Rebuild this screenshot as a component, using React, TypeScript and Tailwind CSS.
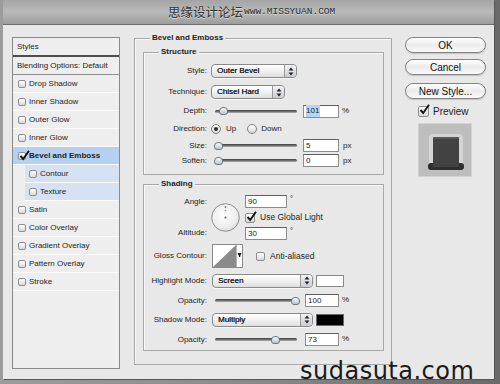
import React from "react";
import clsx from "clsx";

const listItems = [
  { name: "Drop Shadow" },
  { name: "Inner Shadow" },
  { name: "Outer Glow" },
  { name: "Inner Glow" },
  { name: "Bevel and Emboss", checked: true, selected: true },
  { name: "Contour", sub: true },
  { name: "Texture", sub: true },
  { name: "Satin" },
  { name: "Color Overlay" },
  { name: "Gradient Overlay" },
  { name: "Pattern Overlay" },
  { name: "Stroke" },
];

function Checkbox({ checked = false, className }: { checked?: boolean; className?: string }) {
  return (
    <span
      className={clsx(
        "relative inline-block shrink-0 rounded-[2px] border border-[#8d8d8d] bg-gradient-to-b from-white to-[#d9d9d9]",
        className
      )}
    >
      {checked && (
        <svg className="absolute -top-[3px] left-0" width="11" height="11" viewBox="0 0 11 11">
          <path d="M1.5 6 L4.2 9 L10 0.8" stroke="#151515" strokeWidth="1.9" fill="none" />
        </svg>
      )}
    </span>
  );
}

function Radio({ on = false, className }: { on?: boolean; className?: string }) {
  return (
    <span
      className={clsx(
        "flex h-[10px] w-[10px] shrink-0 items-center justify-center rounded-full border border-[#7d7d7d] bg-gradient-to-b from-white to-[#d6d6d6]",
        className
      )}
    >
      {on && <span className="h-[4px] w-[4px] rounded-full bg-[#2a2a2a]" />}
    </span>
  );
}

function Stepper() {
  return (
    <svg width="6" height="9" viewBox="0 0 6 9">
      <path d="M3 0.5 L5.5 3.5 L0.5 3.5 Z" fill="#222" />
      <path d="M3 8.5 L5.5 5.5 L0.5 5.5 Z" fill="#222" />
    </svg>
  );
}

function Select({ value, className }: { value: string; className?: string }) {
  return (
    <div
      className={clsx(
        "flex h-[14px] items-stretch overflow-hidden rounded-[4px] border border-[#8a8a8a] bg-gradient-to-b from-white via-[#f1f1f1] to-[#dedede] shadow-[0_1px_0_#f8f8f8]",
        className
      )}
    >
      <span className="flex flex-1 items-center pl-[5px] text-[#111] [text-shadow:0.3px_0_0_#444]">{value}</span>
      <span className="flex w-[12px] items-center justify-center rounded-r-[3px] border-l border-[#9a9a9a] bg-gradient-to-b from-[#f4f4f4] to-[#c9ccd2]">
        <Stepper />
      </span>
    </div>
  );
}

function Field({ value, className, selected = false }: { value: string; className?: string; selected?: boolean }) {
  return (
    <div
      className={clsx(
        "flex h-[13px] items-center border border-[#8c8c8c] border-t-[#5f5f5f] bg-white pl-[2px] text-[8px]",
        className
      )}
    >
      <span className={clsx(selected && "bg-[#b4d3f7] pr-[1px]")}>{value}</span>
    </div>
  );
}

function Slider({ thumb, className }: { thumb: number; className?: string }) {
  return (
    <div className={clsx("relative flex h-[10px] items-center pl-[4px]", className)}>
      <div className="h-[3px] w-full rounded-full bg-gradient-to-b from-[#3e3e3e] via-[#6e6e6e] to-[#b2b2b2]" />
      <span
        className="absolute top-[1px] h-[8px] w-[9px] rounded-t-[4px] rounded-b-[3px] border border-[#6f7780] bg-gradient-to-b from-[#fbfbfb] to-[#b9c4cf]"
        style={{ left: thumb }}
      />
    </div>
  );
}

function Row({ label, className, children }: { label: string; className?: string; children: React.ReactNode }) {
  return (
    <div className={clsx("flex items-center", className)}>
      <span className="w-[63px] shrink-0 text-right">{label}</span>
      <div className="ml-[4px] flex items-center">{children}</div>
    </div>
  );
}

function AngleDial({ className }: { className?: string }) {
  return (
    <svg className={className} width="29" height="29" viewBox="0 0 29 29">
      <defs>
        <radialGradient id="dial" cx="0.45" cy="0.4" r="0.7">
          <stop offset="0" stopColor="#ffffff" />
          <stop offset="0.7" stopColor="#ececec" />
          <stop offset="1" stopColor="#c4c4c4" />
        </radialGradient>
      </defs>
      <circle cx="14.5" cy="14.5" r="13.8" fill="url(#dial)" stroke="#8e8e8e" strokeWidth="1" />
      <circle cx="14.5" cy="14.5" r="1" fill="#555" />
      <circle cx="14.5" cy="7.5" r="0.8" fill="#9a9a9a" />
      <circle cx="14.5" cy="4" r="0.9" fill="#777" />
    </svg>
  );
}

function ContourPicker({ className }: { className?: string }) {
  return (
    <svg className={className} width="31" height="24" viewBox="0 0 31 24">
      <rect x="0.5" y="0.5" width="30" height="23" fill="#fff" stroke="#8a8a8a" />
      <path d="M1 23 L24 1 L24 23 Z" fill="#8b8b8b" />
      <line x1="24.5" y1="1" x2="24.5" y2="23" stroke="#b5b5b5" />
      <path d="M25.5 9 L29.5 9 L27.5 13 Z" fill="#111" />
      <rect x="27" y="9" width="1.2" height="4" fill="#111" />
    </svg>
  );
}

function PreviewSwatch() {
  return (
    <svg width="54" height="54" viewBox="0 0 54 54">
      <rect x="0.5" y="0.5" width="53" height="53" fill="#bebebe" stroke="#d2d2d2" />
      <rect x="11" y="11" width="34" height="36" rx="4" fill="#d9d9d9" opacity="0.8" />
      <rect x="10" y="40" width="36" height="7" rx="3" fill="#2e2e2e" />
      <rect x="15" y="14" width="26" height="30" fill="#424242" />
      <rect x="15" y="14" width="26" height="2" fill="#575757" />
    </svg>
  );
}

function GroupBox({ title, className, children }: { title: string; className?: string; children: React.ReactNode }) {
  return (
    <div className={clsx("relative border border-[#a8a8a8] shadow-[inset_1px_1px_0_#f7f7f7]", className)}>
      <span className="absolute -top-[6px] left-[15px] bg-[#e8e8e8] px-[2px] font-bold leading-[10px]">{title}</span>
      {children}
    </div>
  );
}

function Button({ label, className }: { label: string; className?: string }) {
  return (
    <div
      className={clsx(
        "flex h-[16px] w-[81px] items-center justify-center rounded-full border border-[#838383] bg-gradient-to-b from-white via-[#ececec] to-[#fafafa] text-[10px] text-[#111] shadow-[0_1px_1px_#c4c4c4]",
        className
      )}
    >
      {label}
    </div>
  );
}

export default function App() {
  return (
    <div className="relative h-[384px] w-[500px] overflow-hidden bg-gradient-to-r from-[#9c9c9c] via-[#8a8a8a] to-[#6a6a6a] font-['Liberation_Sans',Arial,sans-serif] text-[8px] text-[#1d1d1d]">
      <div className="ml-[3px] flex h-[379px] w-[491px] flex-col bg-[#e8e8e8] shadow-[1px_1px_0_#555]">
        <div className="flex h-[25px] shrink-0 items-center border-b border-[#6e6e6e] bg-gradient-to-b from-[#a4a4a4] via-[#bababa] to-[#9d9d9d] pl-[165px]">
          <span className="font-['Noto_Sans_CJK_SC',sans-serif] text-[12.5px] leading-none text-[#333] [text-shadow:0_1px_0_#d8d8d8]">
            思缘设计论坛
          </span>
          <span className="ml-[1px] font-['Liberation_Mono',monospace] text-[9.5px] leading-none text-[#2c2c2c] [text-shadow:0_1px_0_#d8d8d8]">
            www.MISSYUAN.COM
          </span>
        </div>

        <div className="flex flex-1">
          <div className="ml-[9px] mt-[12px] flex h-[332px] w-[108px] flex-col border border-[#8a8a8a] bg-[#eeeeee]">
            <div className="flex h-[17px] items-center pl-[4px]">Styles</div>
            <div className="h-[2px] bg-[#4d4d4d]" />
            <div className="flex h-[17px] items-center pl-[4px]">Blending Options: Default</div>
            <div className="h-[1px] bg-[#8f8f8f]" />
            {listItems.map((item) => (
              <div
                key={item.name}
                className={clsx(
                  "flex h-[18px] items-center border-b border-[#fafafa]",
                  item.selected && "bg-[#b6d0f0] font-bold",
                  item.sub && "ml-[12px] bg-[#d4e2f3] pl-[4px]",
                  !item.sub && "pl-[5px]"
                )}
              >
                <Checkbox checked={item.checked} className="h-[8px] w-[8px]" />
                <span className="ml-[3px]">{item.name}</span>
              </div>
            ))}
          </div>

          <GroupBox title="Bevel and Emboss" className="ml-[14px] mt-[13px] h-[327px] w-[258px]">
            <GroupBox title="Structure" className="ml-[8px] mt-[13px] h-[123px] w-[241px]">
              <Row label="Style:" className="mt-[11px] h-[14px]">
                <Select value="Outer Bevel" className="w-[86px]" />
              </Row>
              <Row label="Technique:" className="mt-[7px] h-[14px]">
                <Select value="Chisel Hard" className="w-[74px]" />
              </Row>
              <Row label="Depth:" className="mt-[5px] h-[14px]">
                <Slider thumb={8} className="w-[86px]" />
                <Field value="101" selected className="ml-[6px] w-[36px]" />
                <span className="ml-[3px] self-start">%</span>
              </Row>
              <Row label="Direction:" className="mt-[4px] h-[14px]">
                <Radio on />
                <span className="ml-[5px]">Up</span>
                <Radio className="ml-[11px]" />
                <span className="ml-[4px]">Down</span>
              </Row>
              <Row label="Size:" className="mt-[3px] h-[13px]">
                <Slider thumb={3} className="w-[86px]" />
                <Field value="5" className="ml-[6px] w-[36px]" />
                <span className="ml-[4px]">px</span>
              </Row>
              <Row label="Soften:" className="mt-[2px] h-[13px]">
                <Slider thumb={3} className="w-[86px]" />
                <Field value="0" className="ml-[6px] w-[36px]" />
                <span className="ml-[4px]">px</span>
              </Row>
            </GroupBox>

            <GroupBox title="Shading" className="ml-[8px] mt-[9px] h-[167px] w-[241px]">
              <div className="mt-[10px] flex">
                <div className="flex h-[44px] w-[63px] flex-col items-end justify-between">
                  <span className="leading-[13px]">Angle:</span>
                  <span className="leading-[12px]">Altitude:</span>
                </div>
                <AngleDial className="ml-[4px] mt-[8px]" />
                <div className="ml-[5px] flex flex-col">
                  <div className="flex h-[13px] items-start">
                    <Field value="90" className="w-[42px]" />
                    <span className="ml-[3px] leading-[8px]">°</span>
                  </div>
                  <div className="mt-[5px] flex h-[9px] items-center">
                    <Checkbox checked className="h-[10px] w-[10px]" />
                    <span className="ml-[5px] text-[8.5px]">Use Global Light</span>
                  </div>
                  <div className="mt-[5px] flex h-[12px] items-start">
                    <Field value="30" className="h-[12px] w-[42px]" />
                    <span className="ml-[3px] leading-[8px]">°</span>
                  </div>
                </div>
              </div>
              <Row label="Gloss Contour:" className="mt-[5px] h-[24px]">
                <ContourPicker className="ml-[1px]" />
                <Checkbox className="ml-[13px] h-[9px] w-[9px]" />
                <span className="ml-[5px] text-[8.5px]">Anti-aliased</span>
              </Row>
              <Row label="Highlight Mode:" className="mt-[6px] h-[13px]">
                <Select value="Screen" className="ml-[1px] h-[13px] w-[101px]" />
                <span className="ml-[3px] h-[12px] w-[28px] border border-[#8a8a8a] bg-white" />
              </Row>
              <Row label="Opacity:" className="mt-[7px] h-[13px]">
                <Slider thumb={80} className="w-[86px]" />
                <Field value="100" className="ml-[8px] w-[34px]" />
                <span className="ml-[3px] self-start">%</span>
              </Row>
              <Row label="Shadow Mode:" className="mt-[6px] h-[13px]">
                <Select value="Multiply" className="ml-[1px] h-[13px] w-[101px]" />
                <span className="ml-[3px] h-[12px] w-[28px] border border-[#6a6a6a] bg-black" />
              </Row>
              <Row label="Opacity:" className="mt-[7px] h-[13px]">
                <Slider thumb={60} className="w-[86px]" />
                <Field value="73" className="ml-[8px] w-[34px]" />
                <span className="ml-[3px] self-start">%</span>
              </Row>
            </GroupBox>
          </GroupBox>

          <div className="ml-[13px] mt-[12px] flex flex-col">
            <Button label="OK" />
            <Button label="Cancel" className="mt-[6px]" />
            <Button label="New Style..." className="mt-[8px]" />
            <div className="ml-[13px] mt-[6px] flex h-[12px] items-center">
              <Checkbox checked className="h-[11px] w-[11px]" />
              <span className="ml-[4px] text-[10px]">Preview</span>
            </div>
            <div className="ml-[13px] mt-[6px]">
              <PreviewSwatch />
            </div>
          </div>
        </div>
      </div>

      <span className="absolute left-[300px] top-[359px] font-['DejaVu_Sans',sans-serif] text-[24px] leading-none tracking-[0.5px] text-[#1a1a1a]">
        sudasuta.com
      </span>
    </div>
  );
}
